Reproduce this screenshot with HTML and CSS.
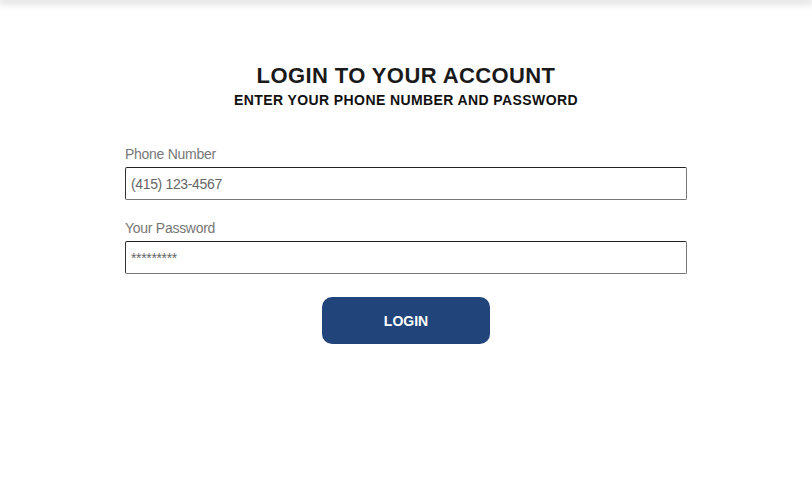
FILE: index.html
```html
<!DOCTYPE html>
<html>
<head>
<meta charset="utf-8">
<link rel="stylesheet" href="styles.css">
</head>
<body>
<div class="topbar"></div>
<main class="login">
  <h1 class="title">LOGIN TO YOUR ACCOUNT</h1>
  <h2 class="subtitle">ENTER YOUR PHONE NUMBER AND PASSWORD</h2>
  <form class="form">
    <label class="field">
      <span class="label">Phone Number</span>
      <input class="input" type="text" placeholder="(415) 123-4567">
    </label>
    <label class="field">
      <span class="label">Your Password</span>
      <input class="input" type="password" placeholder="*********">
    </label>
    <div class="actions">
      <button class="btn" type="button">LOGIN</button>
    </div>
  </form>
</main>
</body>
</html>
```
FILE: styles.css
```css
html, body {
  margin: 0;
  padding: 0;
  background: #fff;
  font-family: "Liberation Sans", Arial, sans-serif;
}
.topbar {
  height: 0;
  box-shadow: 0 0 8px 2px rgba(0,0,0,0.25);
}
.login {
  width: 562px;
  margin: 0 auto;
  padding-top: 63px;
}
.title {
  margin: 0;
  text-align: center;
  font-size: 22px;
  letter-spacing: 0.4px;
  font-weight: bold;
  color: #1a1a1a;
  line-height: 26px;
}
.subtitle {
  margin: 2px 0 0;
  text-align: center;
  font-size: 14px;
  letter-spacing: 0.4px;
  font-weight: bold;
  color: #111;
  line-height: 18px;
}
.form {
  margin-top: 37px;
  display: flex;
  flex-direction: column;
}
.field {
  display: flex;
  flex-direction: column;
  margin-bottom: 20px;
}
.label {
  font-size: 14px;
  letter-spacing: -0.27px;
  color: #777;
  line-height: 16px;
  margin-bottom: 5px;
}
.input {
  box-sizing: border-box;
  width: 100%;
  height: 33px;
  border: 1px solid #777;
  border-top-color: #222;
  border-left-color: #333;
  border-radius: 2px;
  padding: 0 5px;
  font-family: "Liberation Sans", Arial, sans-serif;
  font-size: 14px;
  letter-spacing: -0.35px;
  color: #555;
  outline: none;
}
.input::placeholder {
  color: #666;
}
.actions {
  display: flex;
  justify-content: center;
  margin-top: 3px;
}
.btn {
  width: 168px;
  height: 47px;
  border: none;
  border-radius: 10px;
  background: #21457a;
  color: #fff;
  font-family: "Liberation Sans", Arial, sans-serif;
  font-weight: bold;
  font-size: 14px;
}
```
